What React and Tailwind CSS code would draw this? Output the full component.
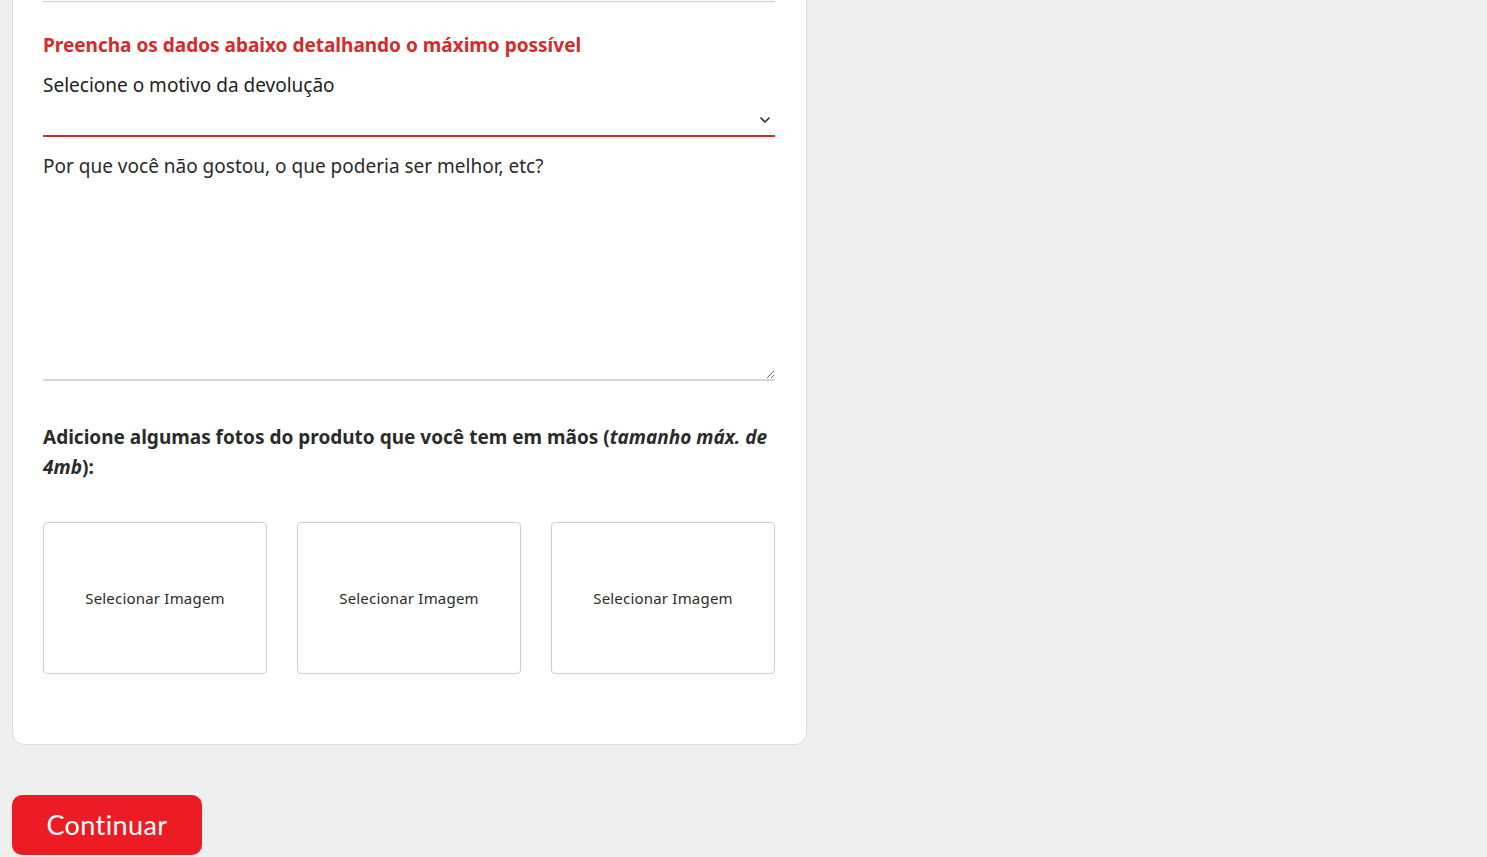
import React, { useState } from "react";
import { ChevronDown } from "lucide-react";

const ImageBox = () => (
  <label className="flex h-[152px] flex-1 cursor-pointer items-center justify-center rounded-[4px] border border-[#cfcfcf] bg-white text-[15px] tracking-[0.2px] text-[#2b2b2b]">
    Selecionar Imagem
    <input type="file" accept="image/*" className="hidden" />
  </label>
);

const App = () => {
  const [motivo, setMotivo] = useState("");
  const [texto, setTexto] = useState("");

  return (
    <div
      className="min-h-screen w-full overflow-hidden bg-[#efefef]"
      style={{ fontFamily: "'Noto Sans', 'Open Sans', sans-serif" }}
    >
      <div className="w-[807px] pl-3">
        {/* Card */}
        <div className="-mt-5 rounded-xl border border-[#dcdcdc] bg-white pb-[70px] pl-[30px] pr-[31px] pt-5">
          <div className="border-t border-[#cfcfcf]" />

          <h2 className="mt-[30px] text-[19px] font-bold leading-[26px] text-[#d52b2b]">
            Preencha os dados abaixo detalhando o máximo possível
          </h2>

          <div className="mt-[14px] text-[19px] leading-[26px] text-[#222]">
            Selecione o motivo da devolução
          </div>

          {/* Select */}
          <div className="relative">
            <select
              value={motivo}
              onChange={(e) => setMotivo(e.target.value)}
              className="h-[39px] w-full appearance-none border-b-2 border-[#d52b2b] bg-transparent text-[16px] text-[#222] outline-none"
            >
              <option value=""></option>
              <option value="defeito">Produto com defeito</option>
              <option value="tamanho">Tamanho errado</option>
              <option value="gostei">Não gostei</option>
            </select>
            <ChevronDown
              className="pointer-events-none absolute right-[2px] top-[14px] h-[16px] w-[16px] text-[#333]"
              strokeWidth={2.5}
            />
          </div>

          {/* Textarea */}
          <textarea
            value={texto}
            onChange={(e) => setTexto(e.target.value)}
            placeholder="Por que você não gostou, o que poderia ser melhor, etc?"
            className="mt-[16px] block h-[228px] w-full resize-y border-b-2 border-[#d6d6d6] text-[19px] leading-[26px] text-[#222] outline-none placeholder:text-[#2a2a2a]"
          />

          <p className="mt-[41px] text-[19px] font-bold leading-[30px] text-[#2b2b2b]">
            Adicione algumas fotos do produto que você tem em mãos (
            <em>tamanho máx. de 4mb</em>):
          </p>

          <div className="mt-[40px] flex gap-[30px]">
            <ImageBox />
            <ImageBox />
            <ImageBox />
          </div>
        </div>

        <button
          type="button"
          className="mt-[50px] flex h-[60px] w-[190px] items-center justify-center rounded-[10px] bg-[#ed1c24] text-[27px] tracking-[0.4px] text-white"
          style={{ fontFamily: "Lato, 'Open Sans', sans-serif" }}
        >
          Continuar
        </button>
      </div>
    </div>
  );
};

export default App;
